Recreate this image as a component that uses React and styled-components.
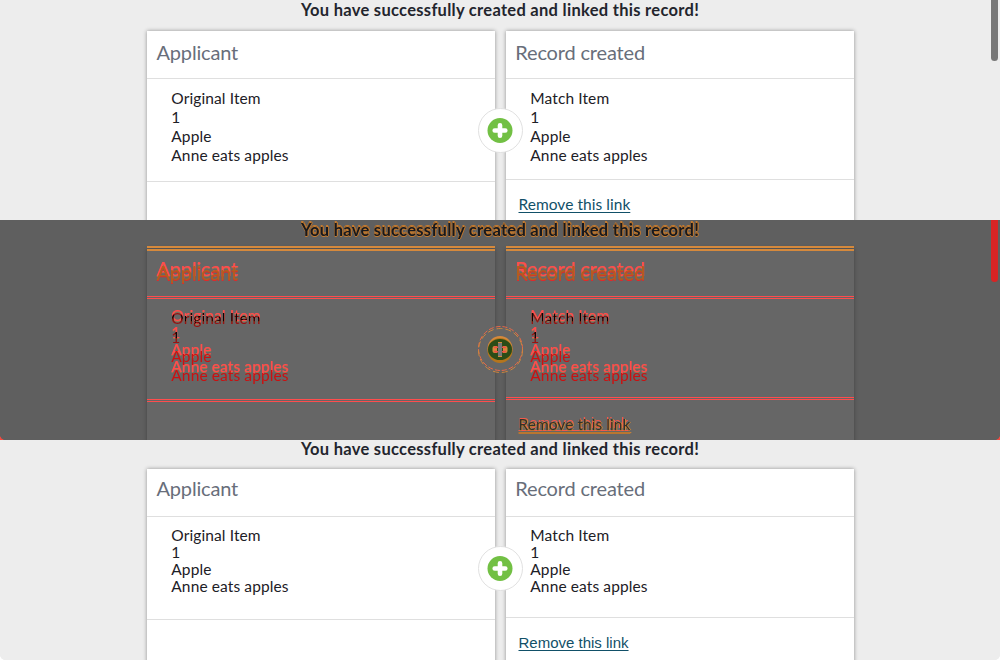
import React from "react";
import styled, { createGlobalStyle, css } from "styled-components";

const GlobalStyle = createGlobalStyle`
  * { box-sizing: border-box; }
  body { margin: 0; background: #ededed; font-family: Lato, "Liberation Sans", sans-serif; overflow: hidden; }
`;

const before = {
  titleHeight: 31, titleLine: 20, header: 48, headLine: 43, bodyTop: 10, row: 19,
  leftBody: 103, rightBody: 101, link: 48, badge: 108,
};
const after = {
  titleHeight: 29, titleLine: 18, header: 48, headLine: 39, bodyTop: 10, row: 17,
  leftBody: 103, rightBody: 101, link: 49, badge: 106,
};

const palettes = {
  normal: { title: "#23252d", head: "#686e7a", text: "#1d2026", link: "#115068", card: "#fff", line: "#dfdfdf", shadow: "0 0 4px rgba(0,0,0,.4)" },
  removed: { title: "#17191e", head: "#ff4d4d", text: "#ff4d4d", link: "#f55a4a", card: "#666", line: "#ff4d4d", shadow: "0 0 4px rgba(0,0,0,.3)", edge: "#d5893c", halo: "rgba(255,77,77,.6)" },
  added: { title: "#17191e", head: "#b0601f", text: "#ff5555", link: "#33302a", card: "transparent", line: "#ff4d4d", shadow: "none", edge: "#d5893c", blend: true },
};

const Page = styled.main`
  display: grid;
  grid-template-rows: repeat(3, 220px);
  width: 1000px;
  height: 660px;
`;
const Panel = styled.section`
  position: relative;
  display: grid;
  isolation: isolate;
  overflow: hidden;
  background: ${(p) => (p.$diff ? "#5f5f5f" : "#ededed")};
`;
const Scene = styled.div`
  grid-area: 1 / 1;
  height: 220px;
  overflow: hidden;
`;
const Title = styled.h1`
  margin: 0;
  height: ${(p) => p.$m.titleHeight}px;
  line-height: ${(p) => p.$m.titleLine}px;
  text-align: center;
  font-size: 16.5px;
  font-weight: 700;
  letter-spacing: 0.29px;
  color: ${(p) => p.$c.title};
  ${(p) => p.$c.edge && css`
    text-shadow: 0 -1px 0 #c47c32, 0 1px 0 #c47c32, 1px 0 0 #b87430;
  `}
`;
const Cards = styled.div`
  display: flex;
  gap: 11px;
  padding-left: 147px;
`;
const Card = styled.article`
  width: 348px;
  height: 240px;
  background: ${(p) => p.$c.card};
  box-shadow: ${(p) => p.$c.shadow};
`;
const EdgeLine = styled.div`
  height: 2px;
  margin: ${(p) => p.$offset}px 0 ${(p) => -2 - p.$offset}px;
  background: ${(p) => p.$c.edge};
`;
const halo = css`
  text-shadow: ${(p) => (p.$c.halo ? `0.5px 0 0 ${p.$c.halo}, 0 1px 0 rgba(213,137,60,.45)` : "none")};
`;
const blended = css`
  mix-blend-mode: ${(p) => (p.$c.blend ? "difference" : "normal")};
`;
const Heading = styled.h2`
  margin: 0;
  height: ${(p) => p.$m.header}px;
  padding-left: ${(p) => p.$pad}px;
  border-bottom: 1px solid ${(p) => p.$c.line};
  font-size: 20px;
  font-weight: 400;
  line-height: ${(p) => p.$m.headLine}px;
  letter-spacing: -0.17px;
`;
const HeadingText = styled.span`
  color: ${(p) => p.$c.head};
  ${halo}
  ${(p) => p.$c.blend && css`
    text-shadow: 0 1px 0 #e02a2a;
  `}
`;
const Body = styled.div`
  height: ${(p) => p.$h}px;
  padding: ${(p) => p.$m.bodyTop}px 0 0 24.3px;
  border-bottom: 1px solid ${(p) => p.$c.line};
  font-size: 15.5px;
  letter-spacing: 0.11px;
`;
const Row = styled.div`
  height: ${(p) => p.$m.row}px;
  line-height: ${(p) => p.$m.row}px;
  color: ${(p) => (p.$solid ? "#cc1010" : p.$c.text)};
  ${halo}
  ${(p) => !p.$solid && blended}
`;
const Action = styled.div`
  height: ${(p) => p.$m.link}px;
  padding-left: 12.5px;
  line-height: ${(p) => p.$m.link}px;
  font-size: ${(p) => (p.$plain ? 15 : 15.5)}px;
`;
const Link = styled.a`
  color: ${(p) => p.$c.link};
  font-family: ${(p) => (p.$plain ? '"Liberation Sans", sans-serif' : "inherit")};
  letter-spacing: ${(p) => (p.$plain ? 0 : 0.04)}px;
  text-decoration: underline;
  text-underline-offset: 2px;
  text-decoration-thickness: 1px;
  ${(p) => p.$c.blend && css`
    text-shadow: 0 1px 0 #b9762f, 1px 0 0 #c8863e;
    text-decoration-color: #b9762f;
  `}
`;
const BadgeBox = styled.svg`
  position: absolute;
  left: 477px;
  top: ${(p) => p.$top}px;
  display: block;
`;
const ScrollThumb = styled.div`
  position: absolute;
  top: 0;
  right: 2px;
  width: 7px;
  height: ${(p) => (p.$diff ? 62 : 61)}px;
  border-radius: 0 0 4px 4px;
  background: ${(p) => (p.$diff ? "#d82424" : "#777")};
`;
const Corner = styled.div`
  position: absolute;
  bottom: 0;
  ${(p) => p.$side}: 0;
  width: 5px;
  height: 5px;
  background: radial-gradient(circle at ${(p) => (p.$side === "left" ? "100%" : "0")} 0, transparent 4.6px, ${(p) => p.$color} 5.2px);
`;

function Badge({ top }) {
  return (
    <BadgeBox $top={top} width="47" height="46" viewBox="0 0 47 46">
      <circle cx="23.5" cy="22.5" r="22" fill="#fff" stroke="#e1e1e1" />
      <circle cx="23" cy="22.5" r="12.5" fill="#72c044" />
      <path d="M23 17.2v10.6M17.7 22.5h10.6" stroke="#fff" strokeWidth="4.6" strokeLinecap="round" />
    </BadgeBox>
  );
}

function DiffBadge() {
  return (
    <BadgeBox $top={106} width="47" height="48" viewBox="0 0 47 48">
      <circle cx="23.5" cy="23.5" r="22" fill="#666" />
      <circle cx="23.5" cy="22.5" r="22" fill="none" stroke="#e9694a" strokeDasharray="5 2" />
      <circle cx="23.5" cy="24.5" r="22" fill="none" stroke="#cf873d" strokeDasharray="6 3" />
      <circle cx="23" cy="22.5" r="12.5" fill="#d5893c" />
      <circle cx="23" cy="24.5" r="12.5" fill="#b5751d" />
      <ellipse cx="23" cy="23.5" rx="12" ry="10.5" fill="#2c4c17" />
      <rect x="15.5" y="20" width="15" height="7" rx="2" fill="#d5893c" />
      <path d="M17.5 21.5h11M17.5 25.5h11" stroke="#ef5045" strokeWidth="1.4" strokeLinecap="round" />
      <rect x="20" y="17" width="6" height="13" fill="#2c4c17" />
      <path d="M18 21.2h10M18 25.8h10" stroke="#ef5045" strokeWidth="1.4" />
      <path d="M23 17v13" stroke="#777" strokeWidth="4" />
      <path d="M21 16.5h4M21 30.5h4" stroke="#d5893c" />
    </BadgeBox>
  );
}

function RecordCard({ heading, pad, item, height, action, m, c, plain, edge }) {
  return (
    <Card $c={c}>
      {edge !== undefined && <EdgeLine $c={c} $offset={edge} />}
      <Heading $m={m} $c={c} $pad={pad}>
        <HeadingText $c={c}>{heading}</HeadingText>
      </Heading>
      <Body $m={m} $c={c} $h={height}>
        <Row $m={m} $c={c}>{item}</Row>
        <Row $m={m} $c={c}>1</Row>
        <Row $m={m} $c={c} $solid={c.blend}>Apple</Row>
        <Row $m={m} $c={c} $solid={c.blend}>Anne eats apples</Row>
      </Body>
      {action && (
        <Action $m={m} $plain={plain}>
          <Link $c={c} $plain={plain}>Remove this link</Link>
        </Action>
      )}
    </Card>
  );
}

function RecordScene({ m, palette, plain, edge }) {
  const c = palettes[palette];
  const shared = { m, c, plain, edge };
  return (
    <Scene>
      <Title $m={m} $c={c}>You have successfully created and linked this record!</Title>
      <Cards>
        <RecordCard {...shared} heading="Applicant" pad={9.5} item="Original Item" height={m.leftBody} />
        <RecordCard {...shared} heading="Record created" pad={9.3} item="Match Item" height={m.rightBody} action />
      </Cards>
    </Scene>
  );
}

export default function App() {
  return (
    <>
      <GlobalStyle />
      <Page>
        <Panel>
          <RecordScene m={before} palette="normal" />
          <Badge top={before.badge} />
          <ScrollThumb />
        </Panel>
        <Panel $diff>
          <RecordScene m={after} palette="removed" plain edge={-3} />
          <RecordScene m={before} palette="added" edge={-2} />
          <DiffBadge />
          <ScrollThumb $diff />
          <Corner $side="left" $color="#f44a40" />
          <Corner $side="right" $color="#f44a40" />
        </Panel>
        <Panel>
          <RecordScene m={after} palette="normal" plain />
          <Badge top={after.badge} />
          <Corner $side="left" $color="#fff" />
          <Corner $side="right" $color="#fff" />
        </Panel>
      </Page>
    </>
  );
}
